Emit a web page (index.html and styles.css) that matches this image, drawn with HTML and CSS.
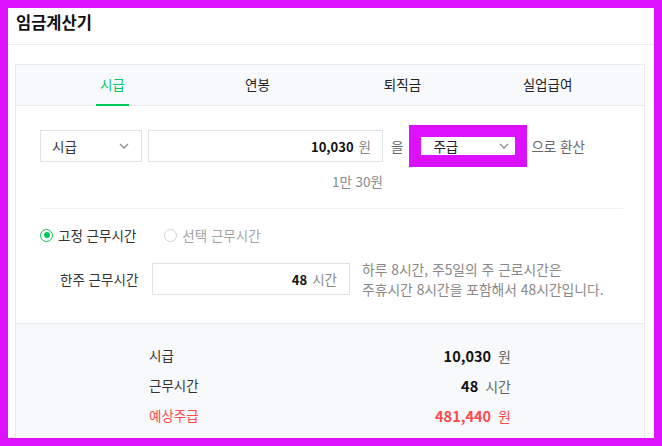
FILE: index.html
```html
<!DOCTYPE html>
<html lang="ko">
<head>
<meta charset="utf-8">
<title>임금계산기</title>
<link rel="stylesheet" href="styles.css">
</head>
<body>
<header class="top">
  <h1 class="title">임금계산기</h1>
</header>
<section class="card">
  <nav class="tabs">
    <div class="tab active"><span>시급</span></div>
    <div class="tab"><span>연봉</span></div>
    <div class="tab"><span>퇴직금</span></div>
    <div class="tab"><span>실업급여</span></div>
  </nav>
  <div class="form">
    <div class="convert-row">
      <div class="select unit-select">
        <span>시급</span>
        <svg class="chev" width="10" height="6" viewBox="0 0 10 6"><path d="M1 1 L5 5 L9 1" fill="none" stroke="#8a8f96" stroke-width="1.3"/></svg>
      </div>
      <div class="field amount">
        <b class="num">10,030</b><span class="unit">원</span>
      </div>
      <span class="word w-eul">을</span>
      <div class="focus-ring">
        <div class="select period-select">
          <span>주급</span>
          <svg class="chev" width="10" height="6" viewBox="0 0 10 6"><path d="M1 1 L5 5 L9 1" fill="none" stroke="#8a8f96" stroke-width="1.3"/></svg>
        </div>
      </div>
      <span class="word w-conv">으로 환산</span>
    </div>
    <div class="korean-amount">1만 30원</div>
    <div class="divider"></div>
    <div class="radios">
      <label class="radio checked"><span class="dot"></span>고정 근무시간</label>
      <label class="radio"><span class="dot"></span>선택 근무시간</label>
    </div>
    <div class="hours-row">
      <span class="hours-label">한주 근무시간</span>
      <div class="field hours">
        <b class="num">48</b><span class="unit">시간</span>
      </div>
      <p class="help">하루 8시간, 주5일의 주 근로시간은<br>주휴시간 8시간을 포함해서 48시간입니다.</p>
    </div>
  </div>
  <div class="result">
    <dl class="result-list">
      <div class="result-row"><dt>시급</dt><dd><b>10,030</b><span>원</span></dd></div>
      <div class="result-row"><dt>근무시간</dt><dd><b>48</b><span>시간</span></dd></div>
      <div class="result-row total"><dt>예상주급</dt><dd><b>481,440</b><span>원</span></dd></div>
    </dl>
  </div>
</section>
</body>
</html>
```
FILE: styles.css
```css
html {
  background: #dd10fd;
}
body {
  margin: 8px;
  height: 430px;
  overflow: hidden;
  background: #ffffff;
  font-family: "Noto Sans CJK KR", "Noto Sans", sans-serif;
  color: #222;
  font-size: 13.5px;
}
.top {
  height: 36px;
  border-bottom: 1px solid #ececec;
}
.title {
  margin: 0;
  padding: 3px 0 0 8px;
  font-size: 16.5px;
  line-height: 22px;
  font-weight: 700;
  color: #111;
}
.card {
  margin: 19px 9px 0 7px;
  border: 1px solid #e8ebee;
  border-bottom: none;
  height: 400px;
  display: flex;
  flex-direction: column;
}
.tabs {
  height: 41px;
  background: #f8f9fb;
  box-shadow: inset 0 -1px 0 #e8ebee;
  padding: 0 24px;
  display: grid;
  grid-template-columns: repeat(4, 1fr);
}
.tab {
  display: flex;
  justify-content: center;
}
.tab span {
  display: block;
  height: 41px;
  box-sizing: border-box;
  line-height: 39px;
  padding: 0 4px;
  color: #222;
}
.tab.active span {
  color: #03c75a;
  border-bottom: 2px solid #03c75a;
}
.form {
  padding: 24px 21px 24px 24px;
}
.convert-row {
  display: flex;
  align-items: center;
  height: 32px;
}
.select {
  display: flex;
  align-items: center;
  justify-content: space-between;
  box-sizing: border-box;
  background: #fff;
}
.unit-select {
  width: 102px;
  height: 32px;
  border: 1px solid #dfe4ea;
  padding: 0 12px 0 11px;
  color: #333;
}
.chev {
  display: block;
}
.field {
  display: flex;
  align-items: center;
  justify-content: flex-end;
  box-sizing: border-box;
  height: 32px;
  border: 1px solid #dfe4ea;
  padding: 0 11px;
}
.amount {
  width: 235px;
  margin-left: 6px;
}
.num {
  font-weight: 700;
  color: #111;
  font-size: 13px;
}
.unit {
  margin-left: 5px;
  color: #888;
}
.word {
  color: #666;
}
.w-eul {
  margin-left: 8px;
}
.focus-ring {
  margin-left: 6px;
  padding: 12px;
  background: #dd10fd;
}
.period-select {
  width: 94px;
  height: 18px;
  padding: 0 6px 0 12px;
  color: #222;
}
.w-conv {
  margin-left: 4px;
}
.korean-amount {
  width: 343px;
  margin-top: 10px;
  text-align: right;
  line-height: 18px;
  color: #888;
}
.divider {
  margin-top: 18px;
  height: 1px;
  background: #eeeff1;
}
.radios {
  display: flex;
  gap: 28px;
  margin-top: 16px;
  line-height: 20px;
}
.radio {
  display: flex;
  align-items: center;
  gap: 5px;
  color: #a4a4a4;
}
.radio.checked {
  color: #333;
}
.dot {
  width: 13px;
  height: 13px;
  box-sizing: border-box;
  border: 1px solid #cfd2d6;
  border-radius: 50%;
  display: flex;
  align-items: center;
  justify-content: center;
}
.radio.checked .dot {
  border: 1.5px solid #03c75a;
}
.radio.checked .dot::after {
  content: "";
  width: 6px;
  height: 6px;
  border-radius: 50%;
  background: #03c75a;
}
.hours-row {
  display: flex;
  align-items: center;
  margin-top: 14px;
}
.hours-label {
  width: 80px;
  margin-left: 20px;
  white-space: nowrap;
  color: #333;
}
.hours {
  width: 198px;
  margin-left: 12px;
  padding-right: 12px;
}
.help {
  margin: 0 0 0 12px;
  line-height: 20px;
  font-size: 13.8px;
  color: #888;
}
.result {
  flex: 1;
  background: #f8f9fb;
  border-top: 1px solid #e8ebee;
  padding-top: 16px;
}
.result-list {
  margin: 0 auto;
  width: 362px;
}
.result-row {
  display: flex;
  justify-content: space-between;
  align-items: center;
  height: 30px;
}
.result-row dt {
  color: #333;
  font-size: 13.5px;
}
.result-row dd {
  margin: 0;
  display: flex;
  align-items: baseline;
}
.result-row dd b {
  font-size: 14.5px;
  font-weight: 700;
  color: #111;
}
.result-row dd span {
  margin-left: 7px;
  font-size: 14px;
  color: #666;
}
.result-row.total dt,
.result-row.total dd b,
.result-row.total dd span {
  color: #ff4b4b;
}
```
